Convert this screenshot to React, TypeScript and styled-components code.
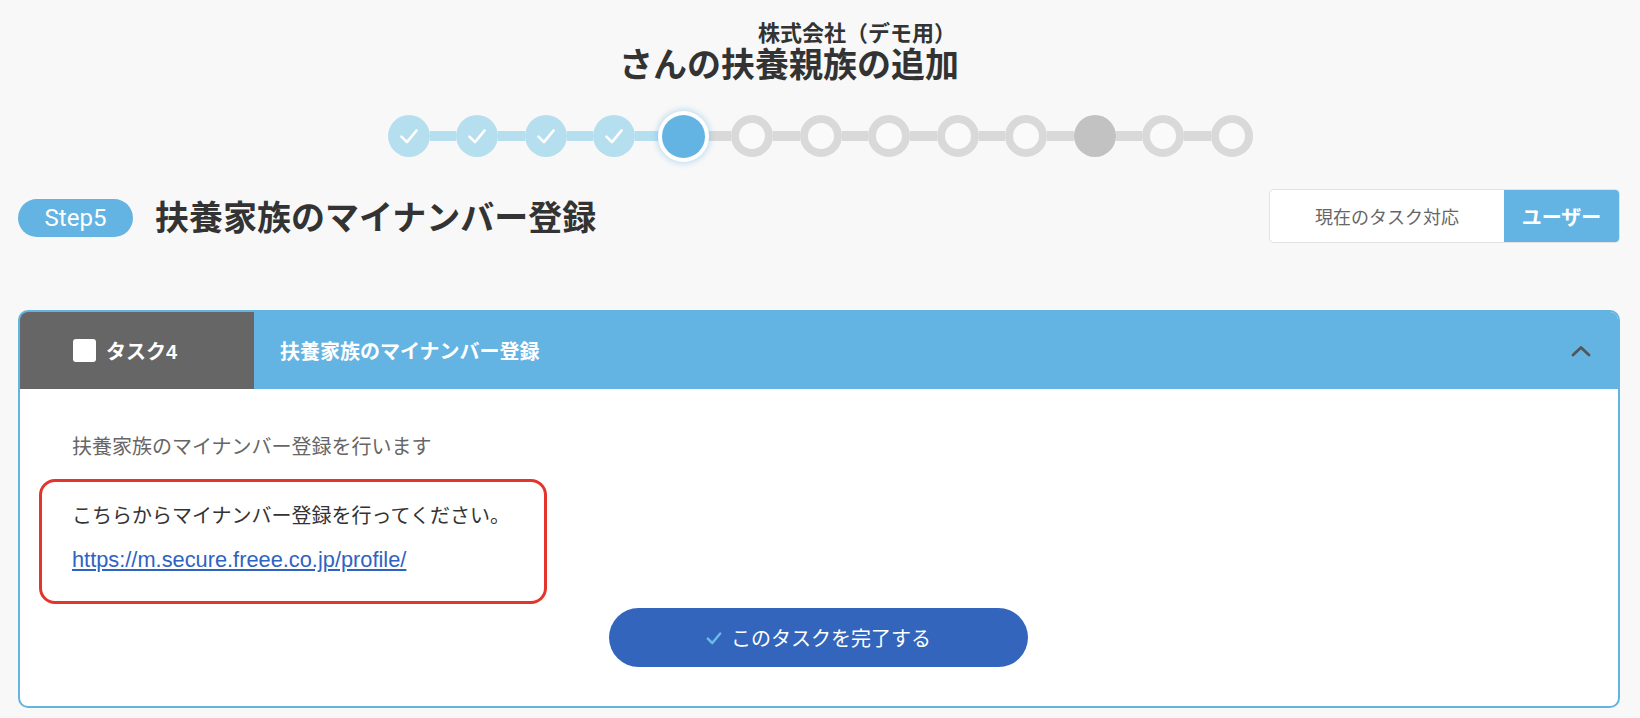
import React from "react";
import styled, { createGlobalStyle, css } from "styled-components";

const GlobalStyle = createGlobalStyle`
  html, body {
    margin: 0;
    padding: 0;
    background: #f8f8f8;
  }
  body {
    font-family: "Liberation Sans", "Noto Sans CJK JP", sans-serif;
    color: #333;
  }
  * { box-sizing: border-box; }
`;

const Page = styled.div`
  width: 1640px;
  min-height: 718px;
  padding: 0 20px 0 18px;
  overflow: hidden;
`;

const TitleWrap = styled.div`
  display: flex;
  justify-content: center;
  padding-right: 60px;
  padding-top: 22px;
`;

const TitleBlock = styled.div`
  display: flex;
  flex-direction: column;
  align-items: flex-end;
`;

const Company = styled.div`
  font-size: 22px;
  font-weight: 700;
  line-height: 24px;
  color: #333;
  margin-right: 3px;
`;

const Title = styled.h1`
  margin: 0;
  font-size: 34px;
  font-weight: 700;
  line-height: 38px;
  color: #333;
`;

const Stepper = styled.div`
  display: flex;
  align-items: center;
  justify-content: center;
  height: 50px;
  margin-top: 27px;
  padding-left: 2px;
`;

type NodeState = "done" | "active" | "todo" | "skip";

const Node = styled.div<{ $state: NodeState }>`
  width: 42px;
  height: 42px;
  border-radius: 50%;
  flex: none;
  display: flex;
  align-items: center;
  justify-content: center;
  ${(p) =>
    p.$state === "done" &&
    css`
      background: #b5dfef;
    `}
  ${(p) =>
    p.$state === "active" &&
    css`
      width: 43px;
      height: 43px;
      background: #64b4e3;
      box-shadow: 0 0 0 4px #fff, 0 0 6px 5px rgba(100, 180, 227, 0.45);
      position: relative;
      z-index: 1;
    `}
  ${(p) =>
    p.$state === "todo" &&
    css`
      background: #fafafa;
      border: 8px solid #d9d9d9;
    `}
  ${(p) =>
    p.$state === "skip" &&
    css`
      background: #c2c2c2;
    `}
`;

const Connector = styled.div<{ $done: boolean }>`
  width: 26.5px;
  height: 10px;
  flex: none;
  background: ${(p) => (p.$done ? "#b5dfef" : "#d9d9d9")};
`;

const StepRow = styled.div`
  display: flex;
  align-items: center;
  justify-content: space-between;
  margin-top: 28px;
  height: 54px;
`;

const StepLeft = styled.div`
  display: flex;
  align-items: center;
  gap: 22px;
  padding-top: 3px;
`;

const StepPill = styled.div`
  width: 115px;
  height: 38px;
  border-radius: 19px;
  background: #64b4e3;
  color: #fff;
  font-family: Roboto, "Liberation Sans", sans-serif;
  font-size: 24px;
  display: flex;
  align-items: center;
  justify-content: center;
`;

const StepTitle = styled.h2`
  margin: 0;
  font-size: 34px;
  font-weight: 700;
  line-height: 40px;
  color: #333;
`;

const Toggle = styled.div`
  display: flex;
  height: 54px;
  border: 1px solid #e3e3e3;
  border-radius: 5px;
  overflow: hidden;
  background: #fff;
`;

const ToggleLabel = styled.div`
  width: 234px;
  display: flex;
  align-items: center;
  justify-content: center;
  font-size: 18px;
  color: #666;
`;

const ToggleValue = styled.div`
  width: 115px;
  display: flex;
  align-items: center;
  justify-content: center;
  background: #64b4e3;
  color: #fff;
  font-size: 20px;
  font-weight: 700;
`;

const Card = styled.section`
  margin-top: 67px;
  border: 2px solid #64b4e3;
  border-radius: 10px;
  overflow: hidden;
  background: #fff;
`;

const CardHeader = styled.div`
  display: flex;
  height: 77px;
  background: #64b4e3;
`;

const TaskTab = styled.div`
  width: 234px;
  background: #666;
  display: flex;
  align-items: center;
  gap: 10px;
  padding-left: 53px;
  color: #fff;
  font-size: 20px;
  font-weight: 700;
`;

const CheckBox = styled.span`
  width: 23px;
  height: 23px;
  background: #fff;
  border-radius: 3px;
  flex: none;
`;

const HeaderTitle = styled.div`
  flex: 1;
  display: flex;
  align-items: center;
  justify-content: space-between;
  padding: 0 27px 0 26px;
  color: #fff;
  font-size: 20px;
  font-weight: 700;
`;

const CardBody = styled.div`
  padding: 43px 19px 39px;
  display: flex;
  flex-direction: column;
`;

const Intro = styled.p`
  margin: 0 0 17px;
  padding-left: 33px;
  font-size: 20px;
  line-height: 30px;
  color: #666;
`;

const Highlight = styled.div`
  width: 508px;
  height: 125px;
  border: 3px solid #e3352b;
  border-radius: 16px;
  padding: 19px 0 0 30px;
  display: flex;
  flex-direction: column;
  gap: 14px;
`;

const Instruction = styled.p`
  margin: 0;
  font-size: 20px;
  line-height: 30px;
  color: #333;
`;

const Link = styled.a`
  font-size: 21.8px;
  line-height: 30px;
  color: #2f63c2;
  text-decoration: underline;
  text-underline-offset: 2px;
`;

const CompleteButton = styled.button`
  align-self: center;
  margin-top: 4px;
  margin-left: -2px;
  width: 419px;
  height: 59px;
  border: none;
  border-radius: 30px;
  background: #3265bb;
  color: #fff;
  font-family: "Liberation Sans", "Noto Sans CJK JP", sans-serif;
  font-size: 20px;
  display: flex;
  align-items: center;
  justify-content: center;
  gap: 8px;
  cursor: pointer;
`;

const CheckIcon = ({
  color,
  size = 16,
  weight = 2.2,
}: {
  color: string;
  size?: number;
  weight?: number;
}) => (
  <svg width={size} height={size} viewBox="0 0 16 16" fill="none">
    <polyline
      points="2.5,8.5 6.5,12.5 13.5,4"
      stroke={color}
      strokeWidth={weight}
      strokeLinecap="round"
      strokeLinejoin="round"
    />
  </svg>
);

const ChevronUp = () => (
  <svg width="20" height="12" viewBox="0 0 20 12" fill="none">
    <polyline
      points="2,10 10,2.5 18,10"
      stroke="#555"
      strokeWidth="2.8"
      strokeLinecap="round"
      strokeLinejoin="round"
    />
  </svg>
);

const steps: NodeState[] = [
  "done",
  "done",
  "done",
  "done",
  "active",
  "todo",
  "todo",
  "todo",
  "todo",
  "todo",
  "skip",
  "todo",
  "todo",
];

export default function App() {
  return (
    <>
      <GlobalStyle />
      <Page>
        <TitleWrap>
          <TitleBlock>
            <Company>株式会社（デモ用）</Company>
            <Title>さんの扶養親族の追加</Title>
          </TitleBlock>
        </TitleWrap>

        <Stepper>
          {steps.map((s, i) => (
            <React.Fragment key={i}>
              {i > 0 && <Connector $done={i <= 4} />}
              <Node $state={s}>
                {s === "done" && <CheckIcon color="#fff" size={22} weight={1.9} />}
              </Node>
            </React.Fragment>
          ))}
        </Stepper>

        <StepRow>
          <StepLeft>
            <StepPill>Step5</StepPill>
            <StepTitle>扶養家族のマイナンバー登録</StepTitle>
          </StepLeft>
          <Toggle>
            <ToggleLabel>現在のタスク対応</ToggleLabel>
            <ToggleValue>ユーザー</ToggleValue>
          </Toggle>
        </StepRow>

        <Card>
          <CardHeader>
            <TaskTab>
              <CheckBox />
              タスク4
            </TaskTab>
            <HeaderTitle>
              扶養家族のマイナンバー登録
              <ChevronUp />
            </HeaderTitle>
          </CardHeader>
          <CardBody>
            <Intro>扶養家族のマイナンバー登録を行います</Intro>
            <Highlight>
              <Instruction>こちらからマイナンバー登録を行ってください。</Instruction>
              <div>
                <Link href="#">https://m.secure.freee.co.jp/profile/</Link>
              </div>
            </Highlight>
            <CompleteButton>
              <CheckIcon color="#6cbbe6" size={18} />
              このタスクを完了する
            </CompleteButton>
          </CardBody>
        </Card>
      </Page>
    </>
  );
}
